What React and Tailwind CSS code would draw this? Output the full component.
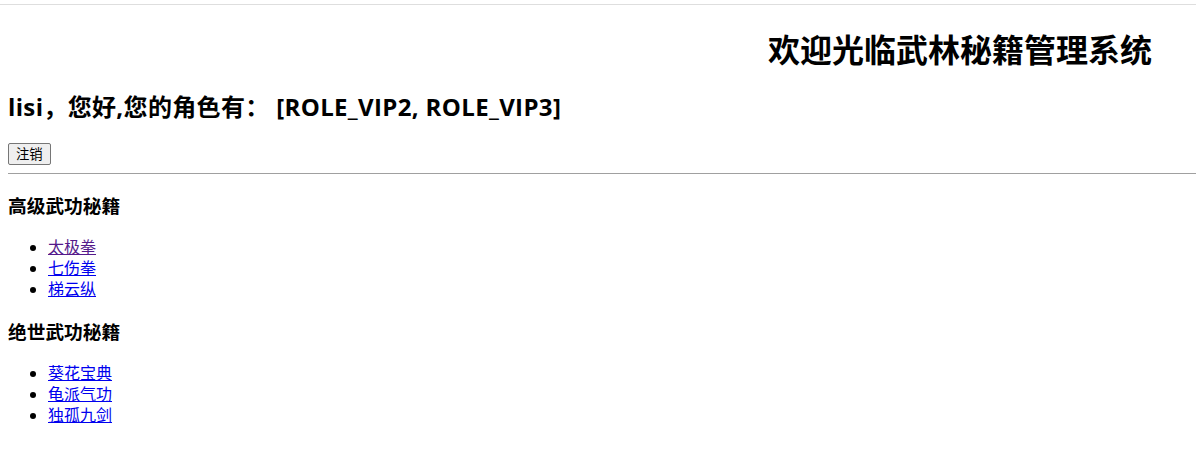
const FONT = "font-['Segoe_UI','Open_Sans','Noto_Sans_CJK_SC',sans-serif]";

const SECTIONS = [
  {
    title: "高级武功秘籍",
    items: [
      { name: "太极拳", visited: true },
      { name: "七伤拳" },
      { name: "梯云纵" },
    ],
  },
  {
    title: "绝世武功秘籍",
    items: [{ name: "葵花宝典" }, { name: "龟派气功" }, { name: "独孤九剑" }],
  },
];

export default function App() {
  return (
    <div className={`${FONT} min-h-[450px] bg-white text-black`}>
      {/* top edge line */}
      <div className="h-[4px]" />
      <div className="h-px bg-[#dedede]" />

      <div className="pl-2">
        <h1 className="mt-[24px] pl-[760px] text-[32px] font-bold leading-[42px]">
          欢迎光临武林秘籍管理系统
        </h1>

        <h2 className="mt-[20px] text-[24px] font-bold leading-[32px] tracking-[0.35px]">
          lisi，您好,您的角色有： [ROLE_VIP2, ROLE_VIP3]
        </h2>

        <div className="mt-[18px]">
          <button className="h-[22px] rounded-[2px] border border-[#767676] bg-[#efefef] px-[7px] text-[13.33px] leading-[18px]">
            注销
          </button>
        </div>

        <div className="mt-[8px] h-px bg-[#a0a0a0]" />

        {SECTIONS.map((s) => (
          <div key={s.title} className="mt-[19px]">
            <h3 className="text-[18.72px] font-bold leading-[25px]">{s.title}</h3>
            <ul className="mt-[19px] mb-[17px] list-disc pl-[40px] text-[16px] leading-[21px]">
              {s.items.map((it) => (
                <li key={it.name}>
                  <a
                    href="#"
                    className={`underline ${it.visited ? "text-[#551a8b]" : "text-[#0000ee]"}`}
                  >
                    {it.name}
                  </a>
                </li>
              ))}
            </ul>
          </div>
        ))}
      </div>
    </div>
  );
}
